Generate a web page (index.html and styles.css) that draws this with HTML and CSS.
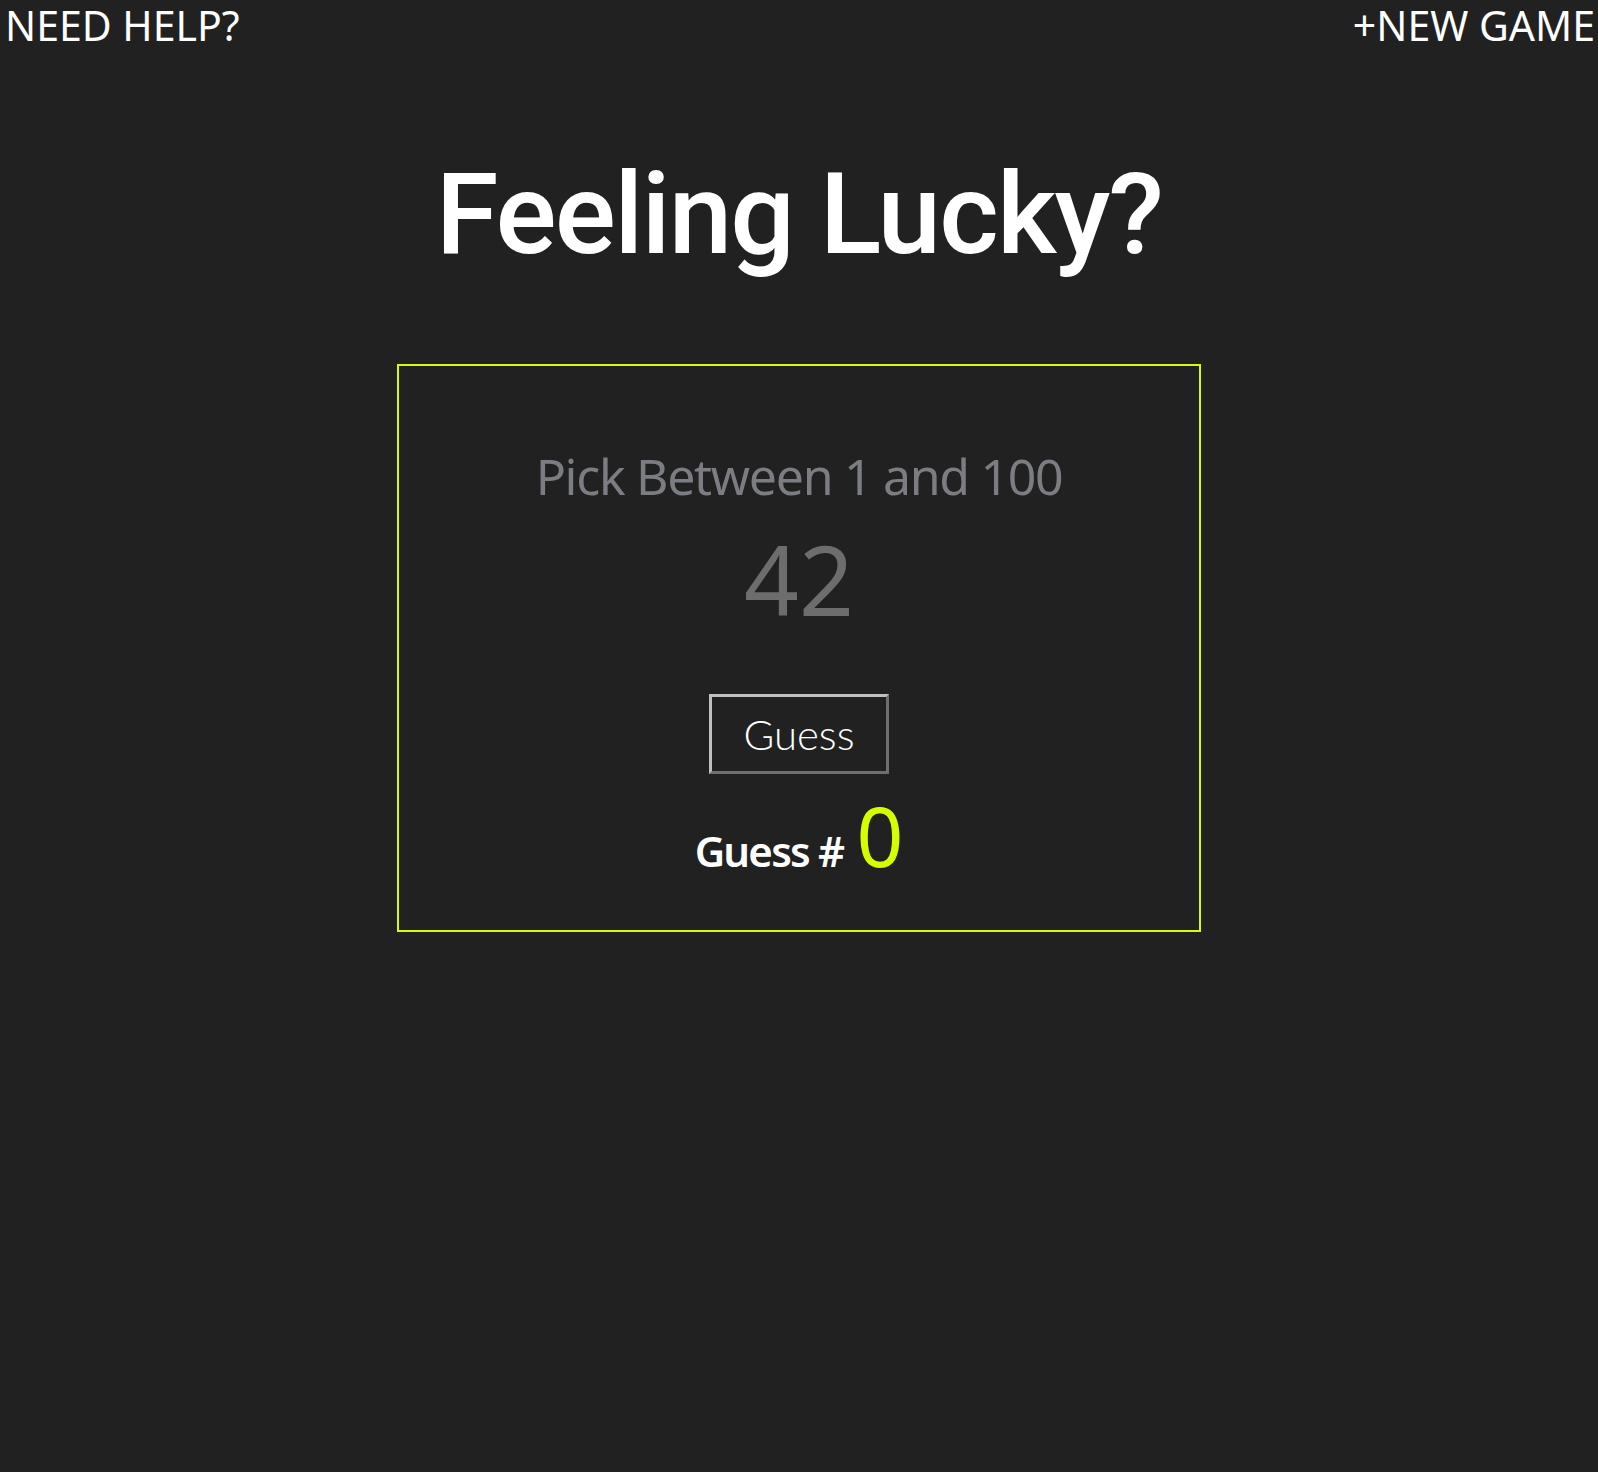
FILE: index.html
```html
<!DOCTYPE html>
<html lang="en">
<head>
<meta charset="utf-8">
<title>Feeling Lucky?</title>
<link rel="stylesheet" href="styles.css">
</head>
<body>
<header class="top-bar">
  <a class="top-link" href="#">NEED HELP?</a>
  <a class="top-link" href="#">+NEW GAME</a>
</header>
<main class="game">
  <h1 class="title">Feeling Lucky?</h1>
  <section class="panel">
    <p class="prompt">Pick Between 1 and 100</p>
    <input class="guess-input" type="text" placeholder="42">
    <button class="guess-btn" type="button">Guess</button>
    <p class="counter"><span class="counter-label">Guess #</span> <span class="counter-value">0</span></p>
  </section>
</main>
</body>
</html>
```

FILE: styles.css
```css
html, body {
  margin: 0;
  padding: 0;
  background: #212121;
  min-height: 100%;
}
body {
  font-family: "Noto Sans", "Open Sans", sans-serif;
  color: #ffffff;
  height: 1472px;
}
.top-bar {
  display: flex;
  justify-content: space-between;
  padding: 0 3px 0 5px;
}
.top-link {
  color: #ffffff;
  text-decoration: none;
  font-size: 41px;
  line-height: 50px;
  font-weight: 400;
}
.game {
  display: flex;
  flex-direction: column;
  align-items: center;
}
.title {
  margin: 89px 0 0;
  font-family: "Roboto", "Noto Sans", sans-serif;
  font-size: 114px;
  line-height: 150px;
  font-weight: 500;
  letter-spacing: -1.8px;
}
.panel {
  box-sizing: border-box;
  width: 804px;
  height: 568px;
  margin-top: 75px;
  border: 2px solid #d4ff00;
  display: flex;
  flex-direction: column;
  align-items: center;
}
.prompt {
  margin: 80px 0 0;
  font-size: 50px;
  line-height: 60px;
  letter-spacing: -1.3px;
  color: #7b7d82;
}
.guess-input {
  margin-top: 18px;
  width: 400px;
  background: transparent;
  border: none;
  outline: none;
  text-align: center;
  font-family: "Noto Sans", sans-serif;
  font-size: 96px;
  font-weight: 400;
  line-height: 110px;
  height: 110px;
  padding: 0;
  color: #6d6d6d;
}
.guess-input::placeholder {
  color: #6d6d6d;
}
.guess-btn {
  margin-top: 60px;
  box-sizing: border-box;
  width: 180px;
  height: 80px;
  background: transparent;
  border-width: 3px;
  border-style: solid;
  border-top-color: #c0c0c0;
  border-left-color: #c0c0c0;
  border-right-color: #6e6e6e;
  border-bottom-color: #6e6e6e;
  color: #ffffff;
  font-family: "Lato", sans-serif;
  font-weight: 300;
  font-size: 42px;
  padding: 0;
}
.counter {
  margin: 20px 0 0;
  display: flex;
  align-items: baseline;
  gap: 13px;
}
.counter-label {
  font-size: 42px;
  font-weight: 600;
  letter-spacing: -1.8px;
}
.counter-value {
  font-size: 82px;
  color: #d4ff00;
  line-height: 1;
}
```
